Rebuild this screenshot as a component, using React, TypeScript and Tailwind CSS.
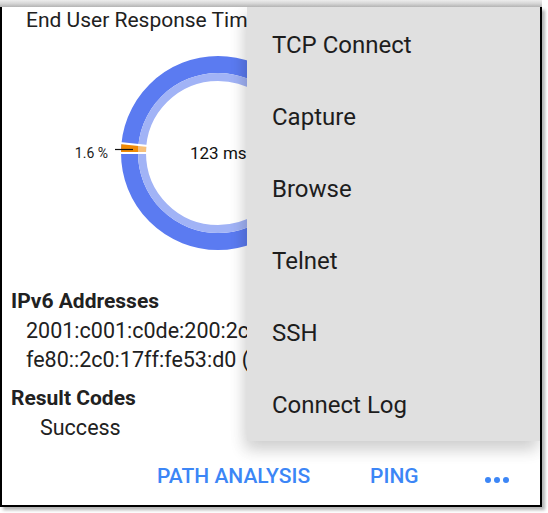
import React from 'react';

const menuItems = ['TCP Connect', 'Capture', 'Browse', 'Telnet', 'SSH', 'Connect Log'];

// ring segment between radii r0..r1, angles in screen degrees
function arc(cx: number, cy: number, r0: number, r1: number, a0: number, a1: number) {
  const p = (r: number, a: number) => {
    const t = (a * Math.PI) / 180;
    return `${(cx + r * Math.cos(t)).toFixed(2)} ${(cy + r * Math.sin(t)).toFixed(2)}`;
  };
  return `M ${p(r1, a0)} A ${r1} ${r1} 0 0 1 ${p(r1, a1)} L ${p(r0, a1)} A ${r0} ${r0} 0 0 0 ${p(r0, a0)} Z`;
}

function Donut() {
  const cx = 216;
  const cy = 122;
  const start = 180;
  const end = 185.8;
  return (
    <svg width="320" height="230" className="block shrink-0">
      <circle cx={cx} cy={cy} r={88.5} fill="none" stroke="#5b7bf1" strokeWidth={17} />
      <circle cx={cx} cy={cy} r={76} fill="none" stroke="#a1b3f6" strokeWidth={8} />
      <path d={arc(cx, cy, 80, 97, start, end)} fill="#ef8a06" />
      <path d={arc(cx, cy, 72, 80, start, end)} fill="#f7c07a" />
      {[start, end].map((a, i) => {
        const t = (a * Math.PI) / 180;
        return (
          <line
            key={i}
            x1={cx + 70 * Math.cos(t)}
            y1={cy + 70 * Math.sin(t)}
            x2={cx + 99 * Math.cos(t)}
            y2={cy + 99 * Math.sin(t)}
            stroke="#fff"
            strokeWidth={2}
          />
        );
      })}
      <line x1={113} y1={118.5} x2={131} y2={118.5} stroke="#111" strokeWidth={1.2} />
      <text x={106} y={127} textAnchor="end" fontSize={14} fill="#222" fontFamily="Roboto, sans-serif">
        1.6 %
      </text>
      <text x={188} y={128} fontSize={17} fill="#111" fontFamily="Roboto, sans-serif">
        123 ms
      </text>
    </svg>
  );
}

export default function App() {
  return (
    <div className="w-[548px] h-[513px] bg-white relative overflow-hidden font-['Roboto',sans-serif] text-[#212121]">
      <div className="h-[7px] w-[542px] bg-gradient-to-b from-[#ededed] via-[#d6d6d6] to-[#b4b4b4]" />
      <div className="relative w-[542px] h-[500px] flex flex-col border-l-2 border-r-2 border-b-2 border-black shadow-[3px_3px_3px_rgba(0,0,0,0.3)] overflow-hidden">
        <div className="pt-[2px] pl-[24px] text-[21px] leading-[22px] whitespace-nowrap">End User Response Time</div>
        <Donut />

        <div className="mt-[26px] pl-[9px] text-[21.5px] leading-[29px]">
          <div className="font-bold text-[21px]">IPv6 Addresses</div>
          <div className="pl-[15px] whitespace-nowrap">2001:c001:c0de:200:2c0:17ff:fe53:d0</div>
          <div className="pl-[15px] whitespace-nowrap">fe80::2c0:17ff:fe53:d0 (link local)</div>
          <div className="font-bold text-[21px] mt-[10px]">Result Codes</div>
          <div className="pl-[29px]">Success</div>
        </div>

        {/* action bar */}
        <div className="mt-auto h-[56px] shrink-0 flex items-center pl-[155px] text-[21px] font-medium text-[#3c86f6]">
          <span>PATH ANALYSIS</span>
          <span className="ml-[60px]">PING</span>
          <span className="ml-[66px] mt-[6px] flex gap-[3px]">
            <span className="w-[6px] h-[6px] rounded-full bg-[#3c86f6]" />
            <span className="w-[6px] h-[6px] rounded-full bg-[#3c86f6]" />
            <span className="w-[6px] h-[6px] rounded-full bg-[#3c86f6]" />
          </span>
        </div>

        {/* overflow menu */}
        <div className="absolute left-[245px] top-0 right-0 h-[434px] bg-[#e0e0e0] pt-[2px] shadow-[-3px_10px_14px_rgba(0,0,0,0.12),0_4px_18px_rgba(0,0,0,0.1)]">
          {menuItems.map((item) => (
            <div key={item} className="h-[72px] flex items-center pl-[25px] text-[24px] text-[#1d1d1d]">
              {item}
            </div>
          ))}
        </div>
      </div>
    </div>
  );
}
